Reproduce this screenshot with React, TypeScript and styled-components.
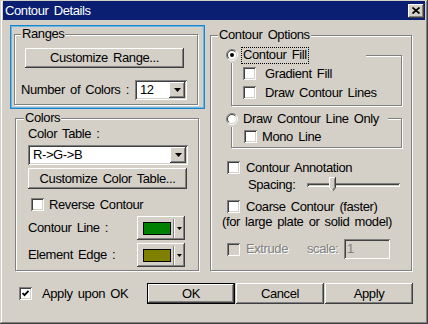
import React from 'react';
import styled, { createGlobalStyle } from 'styled-components';

const FACE = '#d4d0c8';

const GlobalStyle = createGlobalStyle`
  html, body {
    margin: 0;
    padding: 0;
    background: ${FACE};
  }
  body {
    font-family: "Liberation Sans", Arial, sans-serif;
    font-size: 13px;
    line-height: 14px;
    letter-spacing: -0.4px;
    word-spacing: 2px;
    color: #000;
  }
`;

const raised = `
  box-shadow: inset -1px -1px #404040, inset 1px 1px #fff,
    inset -2px -2px #808080, inset 2px 2px ${FACE};
`;

const sunken = `
  box-shadow: inset 1px 1px #808080, inset -1px -1px #fff,
    inset 2px 2px #404040, inset -2px -2px ${FACE};
`;

const Window = styled.div`
  width: 428px;
  height: 324px;
  box-sizing: border-box;
  padding: 1px 3px 3px 3px;
  background: ${FACE};
  display: flex;
  flex-direction: column;
  box-shadow: inset -1px -1px #404040, inset 1px 1px ${FACE},
    inset -2px -2px #808080, inset 2px 2px #fff;
`;

const TitleBar = styled.div`
  height: 19px;
  background: #0a1f72;
  display: flex;
  align-items: center;
  padding-left: 2px;
  padding-right: 1px;
`;

const TitleText = styled.span`
  color: #fff;
  flex: 1;
  white-space: nowrap;
`;

const CloseButton = styled.div`
  width: 16px;
  height: 14px;
  background: ${FACE};
  ${raised}
  display: flex;
  align-items: center;
  justify-content: center;
  padding-right: 1px;
  box-sizing: border-box;
`;

const Main = styled.div`
  display: flex;
  margin-top: 5px;
  padding-left: 7px;
`;

const LeftColumn = styled.div`
  width: 195px;
  display: flex;
  flex-direction: column;
`;

const FocusRect = styled.div`
  width: 195px;
  height: 84px;
  box-sizing: border-box;
  border: 1px solid #1b86cc;
  box-shadow: inset 0 0 0 1px #6cb6e4;
  padding: 1px;
  display: flex;
  flex-direction: column;
`;

const GroupBox = styled.div<{ $w: number; $h: number; $ml: number; $mt: number }>`
  position: relative;
  box-sizing: border-box;
  width: ${(p) => p.$w}px;
  height: ${(p) => p.$h}px;
  margin-left: ${(p) => p.$ml}px;
  margin-top: ${(p) => p.$mt}px;
  flex-shrink: 0;
  border: 1px solid #808080;
  box-shadow: inset 1px 1px #fff, 1px 1px #fff;
  display: flex;
  flex-direction: column;
  align-items: flex-start;
`;

const GroupLabel = styled.span<{ $left: number }>`
  position: absolute;
  top: -8px;
  left: ${(p) => p.$left}px;
  padding: 0 1px;
  background: ${FACE};
  white-space: nowrap;
`;

const PushButton = styled.div<{ $w: number; $h: number; $ml: number; $mt: number; $default?: boolean }>`
  width: ${(p) => p.$w}px;
  height: ${(p) => p.$h}px;
  margin-left: ${(p) => p.$ml}px;
  margin-top: ${(p) => p.$mt}px;
  box-sizing: border-box;
  background: ${FACE};
  ${raised}
  border: ${(p) => (p.$default ? '1px solid #000' : 'none')};
  display: flex;
  align-items: center;
  justify-content: center;
  white-space: nowrap;
  flex-shrink: 0;
`;

const FieldRow = styled.div<{ $mt: number; $ml?: number; $h?: number }>`
  display: flex;
  align-items: center;
  margin-top: ${(p) => p.$mt}px;
  margin-left: ${(p) => p.$ml || 0}px;
  height: ${(p) => p.$h || 20}px;
`;

const FieldLabel = styled.span<{ $w?: number; $ml?: number; $mt?: number; $muted?: boolean }>`
  display: block;
  width: ${(p) => (p.$w ? `${p.$w}px` : 'auto')};
  margin-left: ${(p) => p.$ml || 0}px;
  margin-top: ${(p) => p.$mt || 0}px;
  white-space: nowrap;
  flex-shrink: 0;
  color: ${(p) => (p.$muted ? '#808080' : '#000')};
  text-shadow: ${(p) => (p.$muted ? '1px 1px #fff' : 'none')};
`;

const ComboBox = styled.div<{ $w: number; $mt?: number; $ml?: number }>`
  width: ${(p) => p.$w}px;
  height: 20px;
  margin-top: ${(p) => p.$mt || 0}px;
  margin-left: ${(p) => p.$ml || 0}px;
  box-sizing: border-box;
  background: #fff;
  ${sunken}
  padding: 2px;
  display: flex;
  align-items: center;
  flex-shrink: 0;
`;

const ComboValue = styled.span`
  flex: 1;
  padding-left: 3px;
  white-space: nowrap;
`;

const DropButton = styled.div`
  width: 16px;
  height: 16px;
  box-sizing: border-box;
  background: ${FACE};
  ${raised}
  display: flex;
  align-items: center;
  justify-content: center;
`;

const EditBox = styled.div<{ $w: number }>`
  width: ${(p) => p.$w}px;
  height: 20px;
  box-sizing: border-box;
  ${sunken}
  padding: 2px 3px;
  display: flex;
  align-items: center;
  color: #808080;
`;

const CheckRow = styled.div<{ $ml: number; $mt: number; $gap: number }>`
  display: flex;
  align-items: center;
  gap: ${(p) => p.$gap}px;
  margin-left: ${(p) => p.$ml}px;
  margin-top: ${(p) => p.$mt}px;
  height: 13px;
  white-space: nowrap;
`;

const CheckBoxBox = styled.div<{ $disabled?: boolean }>`
  width: 13px;
  height: 13px;
  box-sizing: border-box;
  flex-shrink: 0;
  background: ${(p) => (p.$disabled ? FACE : '#fff')};
  ${sunken}
  display: flex;
  align-items: center;
  justify-content: center;
`;

const SubGroup = styled.div<{ $h: number; $mt: number }>`
  position: relative;
  box-sizing: border-box;
  width: 171px;
  height: ${(p) => p.$h}px;
  margin-left: 20px;
  margin-top: ${(p) => p.$mt}px;
  flex-shrink: 0;
  border: 1px solid #808080;
  box-shadow: inset 1px 1px #fff, 1px 1px #fff;
  display: flex;
  flex-direction: column;
  align-items: flex-start;
`;

const RadioLabel = styled.div<{ $w: number; $top: number }>`
  position: absolute;
  left: -6px;
  top: ${(p) => p.$top}px;
  width: ${(p) => p.$w}px;
  height: 16px;
  background: ${FACE};
  display: flex;
  align-items: center;
  white-space: nowrap;
`;

const FocusText = styled.span<{ $focus?: boolean }>`
  margin-left: 4px;
  padding: 0 1px 1px 1px;
  outline: ${(p) => (p.$focus ? '1px dotted #000' : 'none')};
  outline-offset: 0;
`;

const ColorRow = styled.div<{ $mt: number }>`
  display: flex;
  align-items: center;
  margin-top: ${(p) => p.$mt}px;
  height: 24px;
`;

const ColorButton = styled.div`
  width: 48px;
  height: 24px;
  box-sizing: border-box;
  background: ${FACE};
  ${raised}
  display: flex;
  align-items: center;
  padding-left: 6px;
`;

const Swatch = styled.div<{ $color: string }>`
  width: 28px;
  height: 13px;
  box-sizing: border-box;
  border: 1px solid #000;
  background: ${(p) => p.$color};
`;

const Separator = styled.div`
  width: 1px;
  height: 19px;
  margin-left: 2px;
  background: #808080;
  box-shadow: 1px 0 #fff;
`;

const SliderRow = styled.div`
  display: flex;
  align-items: center;
  margin-top: 3px;
  height: 15px;
`;

const Slider = styled.div`
  position: relative;
  width: 93px;
  height: 15px;
  display: flex;
  align-items: center;
`;

const Track = styled.div`
  width: 100%;
  height: 4px;
  box-sizing: border-box;
  ${sunken}
`;

const Thumb = styled.svg`
  position: absolute;
  left: 22px;
  top: 0;
`;

const RightGroup = styled(GroupBox)``;

const Footer = styled.div`
  display: flex;
  align-items: center;
  height: 21px;
  margin-top: 12px;
  padding-left: 16px;
  padding-right: 12px;
`;

const FooterCheck = styled.div`
  display: flex;
  align-items: center;
  gap: 10px;
  white-space: nowrap;
`;

const ButtonBar = styled.div`
  display: flex;
  gap: 1px;
  margin-left: auto;
`;

const Arrow = () => (
  <svg width="7" height="4" viewBox="0 0 7 4">
    <path d="M0 0h7L3.5 4z" fill="#000" />
  </svg>
);

const SmallArrow = () => (
  <svg width="5" height="3" viewBox="0 0 5 3" style={{ marginLeft: 3 }}>
    <path d="M0 0h5L2.5 3z" fill="#000" />
  </svg>
);

function Combo({ value, width, mt, ml }: { value: string; width: number; mt?: number; ml?: number }) {
  return (
    <ComboBox $w={width} $mt={mt} $ml={ml}>
      <ComboValue>{value}</ComboValue>
      <DropButton>
        <Arrow />
      </DropButton>
    </ComboBox>
  );
}

function CheckBox({ checked, disabled }: { checked?: boolean; disabled?: boolean }) {
  return (
    <CheckBoxBox $disabled={disabled}>
      {checked && (
        <svg width="9" height="9" viewBox="0 0 9 9">
          <path d="M1.5 4l2 2.2L7.5 1.8" stroke="#000" strokeWidth="1.8" fill="none" />
        </svg>
      )}
    </CheckBoxBox>
  );
}

function Radio({ checked }: { checked?: boolean }) {
  return (
    <svg width="12" height="12" viewBox="0 0 12 12" style={{ flexShrink: 0 }}>
      <circle cx="6" cy="6" r="4.5" fill="#fff" />
      <path d="M2.1 9.9A5.5 5.5 0 0 1 9.9 2.1" stroke="#808080" fill="none" />
      <path d="M9.9 2.1A5.5 5.5 0 0 1 2.1 9.9" stroke="#fff" fill="none" />
      <path d="M2.8 9.2A4.5 4.5 0 0 1 9.2 2.8" stroke="#404040" fill="none" />
      <path d="M9.2 2.8A4.5 4.5 0 0 1 2.8 9.2" stroke={FACE} fill="none" />
      {checked && <circle cx="6" cy="6" r="2" fill="#000" />}
    </svg>
  );
}

function ColorPick({ label, color, mt }: { label: string; color: string; mt: number }) {
  return (
    <ColorRow $mt={mt}>
      <FieldLabel $w={109} $ml={12}>{label}</FieldLabel>
      <ColorButton>
        <Swatch $color={color} />
        <Separator />
        <SmallArrow />
      </ColorButton>
    </ColorRow>
  );
}

export default function App() {
  return (
    <>
      <GlobalStyle />
      <Window>
        <TitleBar>
          <TitleText>Contour Details</TitleText>
          <CloseButton>
            <svg width="8" height="7" viewBox="0 0 8 7">
              <path d="M0.5 0.5L7.5 6.5M7.5 0.5L0.5 6.5" stroke="#000" strokeWidth="1.7" />
            </svg>
          </CloseButton>
        </TitleBar>

        <Main>
          <LeftColumn>
            <FocusRect>
              <GroupBox $w={184} $h={71} $ml={2} $mt={7}>
                <GroupLabel $left={6}>Ranges</GroupLabel>
                <PushButton $w={159} $h={20} $ml={10} $mt={13}>
                  Customize Range...
                </PushButton>
                <FieldRow $mt={12}>
                  <FieldLabel $w={114} $ml={6}>Number of Colors :</FieldLabel>
                  <Combo value="12" width={52} />
                </FieldRow>
              </GroupBox>
            </FocusRect>

            <GroupBox $w={184} $h={153} $ml={5} $mt={9}>
              <GroupLabel $left={8}>Colors</GroupLabel>
              <FieldLabel $ml={12} $mt={8}>Color Table :</FieldLabel>
              <Combo value="R->G->B" width={160} mt={4} ml={12} />
              <PushButton $w={159} $h={21} $ml={12} $mt={3}>
                Customize Color Table...
              </PushButton>
              <CheckRow $ml={15} $mt={9} $gap={5}>
                <CheckBox />
                <span>Reverse Contour</span>
              </CheckRow>
              <ColorPick label="Contour Line :" color="#008000" mt={5} />
              <ColorPick label="Element Edge :" color="#808000" mt={3} />
            </GroupBox>
          </LeftColumn>

          <RightGroup $w={202} $h={236} $ml={5} $mt={10}>
            <GroupLabel $left={7}>Contour Options</GroupLabel>

            <SubGroup $h={51} $mt={19}>
              <RadioLabel $w={140} $top={-9}>
                <Radio checked />
                <FocusText $focus>Contour Fill</FocusText>
              </RadioLabel>
              <CheckRow $ml={11} $mt={11} $gap={9}>
                <CheckBox />
                <span>Gradient Fill</span>
              </CheckRow>
              <CheckRow $ml={11} $mt={6} $gap={9}>
                <CheckBox />
                <span>Draw Contour Lines</span>
              </CheckRow>
            </SubGroup>

            <SubGroup $h={30} $mt={12}>
              <RadioLabel $w={162} $top={-8}>
                <Radio />
                <FocusText>Draw Contour Line Only</FocusText>
              </RadioLabel>
              <CheckRow $ml={12} $mt={11} $gap={5}>
                <CheckBox />
                <span>Mono Line</span>
              </CheckRow>
            </SubGroup>

            <CheckRow $ml={16} $mt={13} $gap={6}>
              <CheckBox />
              <span>Contour Annotation</span>
            </CheckRow>
            <SliderRow>
              <FieldLabel $w={59} $ml={37}>Spacing:</FieldLabel>
              <Slider>
                <Track />
                <Thumb width="7" height="15" viewBox="0 0 7 15">
                  <path d="M0.5 0.5h6v10l-3 3.5l-3-3.5z" fill={FACE} />
                  <path d="M0.5 10.5V0.5h5.5" stroke="#fff" fill="none" />
                  <path d="M6.5 0v10.7l-3 3.5" stroke="#404040" fill="none" />
                  <path d="M5.5 1.5v8.8l-2 2.3" stroke="#808080" fill="none" />
                  <path d="M0.5 10.5l3 3.5" stroke="#fff" fill="none" />
                </Thumb>
              </Slider>
            </SliderRow>
            <CheckRow $ml={16} $mt={8} $gap={6}>
              <CheckBox />
              <span>Coarse Contour (faster)</span>
            </CheckRow>
            <FieldLabel $ml={11} $mt={2}>(for large plate or solid model)</FieldLabel>
            <FieldRow $mt={10} $ml={16}>
              <CheckBox disabled />
              <FieldLabel $w={61} $ml={6} $muted>Extrude</FieldLabel>
              <FieldLabel $w={37} $muted>scale:</FieldLabel>
              <EditBox $w={46}>1</EditBox>
            </FieldRow>
          </RightGroup>
        </Main>

        <Footer>
          <FooterCheck>
            <CheckBox checked />
            <span>Apply upon OK</span>
          </FooterCheck>
          <ButtonBar>
            <PushButton $w={88} $h={21} $ml={0} $mt={0} $default>OK</PushButton>
            <PushButton $w={88} $h={21} $ml={0} $mt={0}>Cancel</PushButton>
            <PushButton $w={88} $h={21} $ml={0} $mt={0}>Apply</PushButton>
          </ButtonBar>
        </Footer>
      </Window>
    </>
  );
}
